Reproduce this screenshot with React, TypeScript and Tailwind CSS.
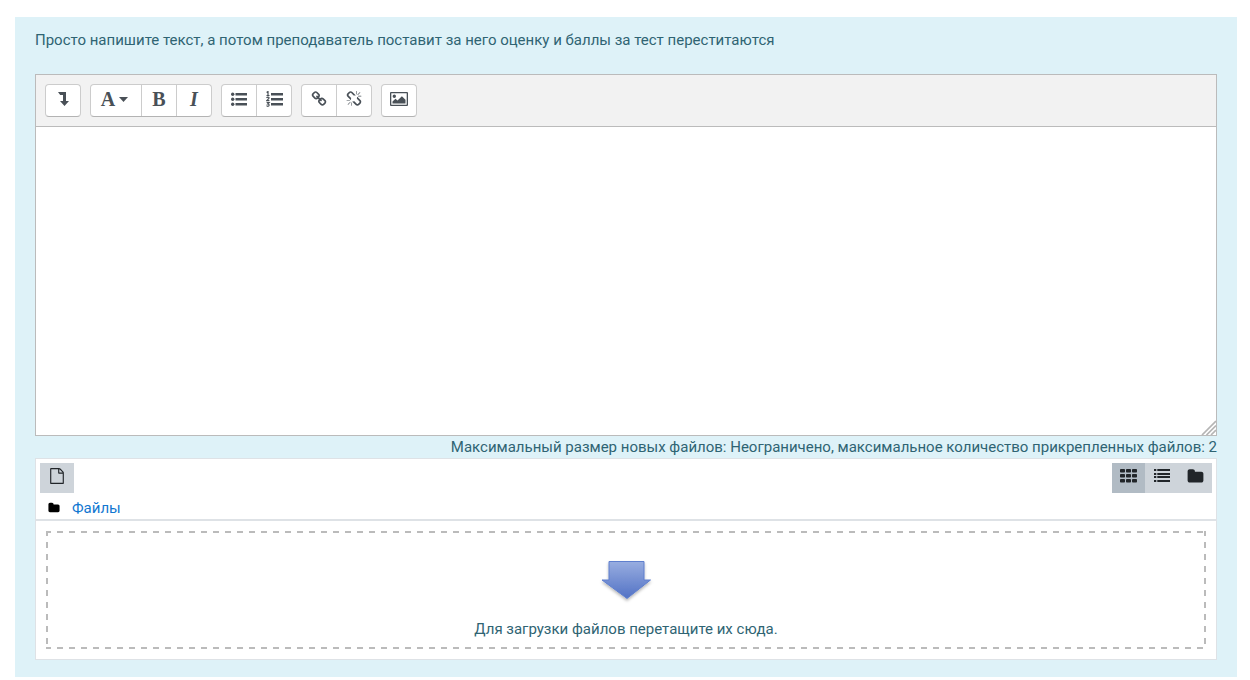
import type { ReactNode } from "react";
import clsx from "clsx";

type IconProps = {
  path: string;
  viewBox?: string;
  className?: string;
};

const Icon = ({ path, viewBox = "0 0 1792 1792", className = "h-4 w-4" }: IconProps) => (
  <svg viewBox={viewBox} className={clsx("shrink-0", className)} fill="currentColor" aria-hidden="true">
    <path d={path} />
  </svg>
);

const icons = {
  levelDown: "M1 1h8v9h3l-4.5 5L3 10h3V4H3.2z",
  link: "M1520 1216q0-40-28-68l-208-208q-28-28-68-28-42 0-72 32 3 3 19 18.5t21.5 21.5 15 19 13 25.5 3.5 27.5q0 40-28 68t-68 28q-15 0-27.5-3.5t-25.5-13-19-15-21.5-21.5-18.5-19q-33 31-33 73 0 40 28 68l206 207q27 27 68 27 40 0 68-26l147-146q28-28 28-67zm-703-705q0-40-28-68l-206-207q-28-28-68-28-39 0-68 27l-147 146q-28 28-28 67 0 40 28 68l208 208q27 27 68 27 42 0 72-31-3-3-19-18.5t-21.5-21.5-15-19-13-25.5-3.5-27.5q0-40 28-68t68-28q15 0 27.5 3.5t25.5 13 19 15 21.5 21.5 18.5 19q33-31 33-73zm895 705q0 120-85 203l-147 146q-83 83-203 83-121 0-204-85l-206-207q-83-83-83-203 0-123 88-209l-88-88q-86 88-208 88-120 0-204-84l-208-208q-84-84-84-204t85-203l147-146q83-83 203-83 121 0 204 85l206 207q83 83 83 203 0 123-88 209l88 88q86-88 208-88 120 0 204 84l208 208q84 84 84 204z",
  unlink:
    "M503 1271l-256 256q-10 9-23 9-12 0-23-9-9-10-9-23t9-23l256-256q10-9 23-9t23 9q9 10 9 23t-9 23zm169 41v320q0 14-9 23t-23 9-23-9-9-23v-320q0-14 9-23t23-9 23 9 9 23zm-224-224q0 14-9 23t-23 9h-320q-14 0-23-9t-9-23 9-23 23-9h320q14 0 23 9t9 23zm1264 128q0 120-85 203l-147 146q-83 83-203 83-121 0-204-85l-334-335q-21-21-42-56l239-18 273 274q28 28 68 27.5t68-27.5l147-146q28-28 28-67 0-40-28-68l-274-275 18-239q35 21 56 42l336 336q84 86 84 204zm-617-724l-239 18-273-274q-28-28-68-28-39 0-68 27l-147 146q-28 28-28 67 0 40 28 68l274 274-18 240q-35-21-56-42l-336-336q-84-86-84-204 0-120 85-203l147-146q83-83 203-83 121 0 204 85l334 335q21 21 42 56zm633 84q0 14-9 23t-23 9h-320q-14 0-23-9t-9-23 9-23 23-9h320q14 0 23 9t9 23zm-544-544v320q0 14-9 23t-23 9-23-9-9-23v-320q0-14 9-23t23-9 23 9 9 23zm407 151l-256 256q-11 9-23 9t-23-9q-9-10-9-23t9-23l256-256q10-9 23-9t23 9q9 10 9 23t-9 23z",
  picture: "M1 1h16a1 1 0 0 1 1 1v12a1 1 0 0 1-1 1H1a1 1 0 0 1-1-1V2a1 1 0 0 1 1-1zm.3 1.3v11.4h15.4V2.3zM4.3 3.6a1.7 1.7 0 1 1 0 3.4 1.7 1.7 0 0 1 0-3.4zM2.5 12.5v-2l3-2.8 2 1.8 4.4-4.3 3.6 3.6v3.7z",
  file: "M1596 380q28 28 48 76t20 88v1152q0 40-28 68t-68 28h-1344q-40 0-68-28t-28-68v-1600q0-40 28-68t68-28h896q40 0 88 20t76 48zm-444-244v376h376q-10-29-22-41l-313-313q-12-12-41-22zm384 1528v-1024h-416q-40 0-68-28t-28-68v-416h-768v1536h1280z",
  folder:
    "M1728 608v704q0 92-66 158t-158 66h-1216q-92 0-158-66t-66-158v-960q0-92 66-158t158-66h320q92 0 158 66t66 158v32h672q92 0 158 66t66 158z",
};

const BulletListIcon = () => (
  <svg viewBox="0 0 16 16" className="h-4 w-4 shrink-0" fill="currentColor" aria-hidden="true">
    <path d="M4.5 2H16v2.4H4.5zM4.5 7H16v2.4H4.5zM4.5 12H16v2.4H4.5z" />
    {[3.2, 8.2, 13.2].map((y) => (
      <circle key={y} cx="1.7" cy={y} r="1.7" />
    ))}
  </svg>
);

const NumberedListIcon = () => (
  <svg viewBox="0 0 17 16" className="h-4 w-[17px] shrink-0" fill="currentColor" aria-hidden="true">
    <path d="M5 2h12v2.4H5zM5 7h12v2.4H5zM5 12h12v2.4H5z" />
    <path
      d="M.6 1.4L2 .5v4M.5 4.5h3M.6 7q.5-1 1.5-.9 1.1.2.9 1.1-.1.6-2.3 2.4h2.7M.6 11.5h2.5l-1.4 1.5q1.5 0 1.5 1.1 0 1.2-1.3 1.2-.9 0-1.4-.6"
      fill="none"
      stroke="currentColor"
      strokeWidth="1.2"
    />
  </svg>
);

const GridIcon = () => (
  <svg viewBox="0 0 17 14" className="h-3.5 w-[17px]" fill="currentColor" aria-hidden="true">
    {[0, 5, 10].map((y) =>
      [0, 6, 12].map((x) => <rect key={`${x}-${y}`} x={x} y={y} width="5" height="3.6" rx="0.8" />)
    )}
  </svg>
);

const DetailsIcon = () => (
  <svg viewBox="0 0 16 14" className="h-3.5 w-4" fill="currentColor" aria-hidden="true">
    {[0, 4, 7, 11].map((y) => (
      <path key={y} d={`M0 ${y}h2.3v2H0zM3.3 ${y}H16v2H3.3z`} />
    ))}
  </svg>
);

const DropArrow = () => (
  <svg viewBox="0 0 60 50" className="h-[50px] w-[60px]" aria-hidden="true">
    <defs>
      <linearGradient id="arrowFill" x1="0" y1="0" x2="0" y2="1">
        <stop offset="0" stopColor="#98ade0" />
        <stop offset="1" stopColor="#5272c5" />
      </linearGradient>
      <filter id="arrowShadow" x="-20%" y="-20%" width="140%" height="150%">
        <feDropShadow dx="0" dy="2" stdDeviation="1.8" floodColor="#000" floodOpacity="0.28" />
      </filter>
    </defs>
    <path
      d="M13 5.5h35V24h6.5L31 42.500L6 24H13z"
      fill="url(#arrowFill)"
      stroke="#5f7fcd"
      filter="url(#arrowShadow)"
    />
  </svg>
);

// Groups of editor buttons, left to right
const toolbar: { label: string; icon: ReactNode; wide?: boolean }[][] = [
  [
    {
      label: "Показать больше кнопок",
      icon: <Icon path={icons.levelDown} viewBox="0 0 12 16" className="h-4 w-3" />,
    },
  ],
  [
    {
      label: "Стили абзаца",
      wide: true,
      icon: (
        <>
          <span className="font-['Liberation_Serif',serif] text-xl leading-4 font-bold">A</span>
          <svg viewBox="0 0 9 5" className="ml-1 h-[5px] w-[9px]" fill="currentColor" aria-hidden="true">
            <path d="M0 0h9L4.5 5z" />
          </svg>
        </>
      ),
    },
    {
      label: "Полужирный",
      icon: <span className="font-['Liberation_Serif',serif] text-xl leading-4 font-bold">B</span>,
    },
    {
      label: "Курсив",
      icon: <span className="font-['Liberation_Serif',serif] text-xl leading-4 font-bold italic">I</span>,
    },
  ],
  [
    { label: "Маркированный список", icon: <BulletListIcon /> },
    { label: "Нумерованный список", icon: <NumberedListIcon /> },
  ],
  [
    { label: "Ссылка", icon: <Icon path={icons.link} /> },
    { label: "Убрать ссылку", icon: <Icon path={icons.unlink} /> },
  ],
  [
    {
      label: "Изображение",
      icon: <Icon path={icons.picture} viewBox="0 0 18 16" className="h-4 w-[18px]" />,
    },
  ],
];

const views = [
  { label: "Значки", icon: <GridIcon />, active: true },
  { label: "Таблица", icon: <DetailsIcon />, active: false },
  { label: "Дерево", icon: <Icon path={icons.folder} className="h-[17px] w-[17px]" />, active: false },
];

const Editor = () => (
  <div className="relative border border-[#bbb] bg-white">
    <div className="flex flex-wrap gap-[9px] border-b border-[#bbb] bg-[#f2f2f2] p-[9px]">
      {toolbar.map((group, index) => (
        <div key={index} className="flex rounded border border-[#ccc] border-b-[#b3b3b3] bg-white">
          {group.map((button, i) => (
            <button
              key={button.label}
              type="button"
              title={button.label}
              aria-label={button.label}
              className={clsx(
                "flex h-[31px] items-center justify-center pb-[3px] text-[#495057]",
                button.wide ? "w-[50px] pr-[3px]" : i === 0 ? "w-[34px]" : "w-[35px]",
                i > 0 && "border-l border-[#ccc]"
              )}
            >
              {button.icon}
            </button>
          ))}
        </div>
      ))}
    </div>
    <textarea
      aria-label="Текст ответа"
      className="block h-[308px] w-full resize-none bg-white p-2 text-[#495057] outline-none"
    />
    {/* resize grip */}
    <svg
      viewBox="0 0 15 15"
      className="absolute right-0 bottom-0 h-[15px] w-[15px]"
      fill="none"
      stroke="#b5b5b5"
      strokeWidth="1.7"
      aria-hidden="true"
    >
      <path d="M1 15L15 1M5.5 15L15 5.5M10 15l5-5" />
    </svg>
  </div>
);

const FileManager = () => (
  <div className="border border-[#dee2e6] bg-white">
    <div className="flex justify-between p-1">
      <button
        type="button"
        title="Добавить"
        aria-label="Добавить"
        className="flex h-[30px] w-[34px] justify-center bg-[#ced4da] pt-[5px] text-[#212529]"
      >
        <Icon path={icons.file} />
      </button>
      <div className="flex">
        {views.map((view) => (
          <button
            key={view.label}
            type="button"
            title={view.label}
            aria-label={view.label}
            className={clsx(
              "flex h-[30px] w-[33px] justify-center pt-1 text-[#212529] last:w-[34px]",
              view.active ? "bg-[#b1bbc4]" : "bg-[#ced4da]"
            )}
          >
            <span className="flex h-[18px] items-center">{view.icon}</span>
          </button>
        ))}
      </div>
    </div>
    <div className="flex items-center border-b-2 border-[#dee2e6] pl-3 leading-[22px]">
      <Icon path={icons.folder} className="h-3 w-3 text-black" />
      <a href="#" className="ml-3 text-[#1177d1]">
        Файлы
      </a>
    </div>
    <div className="p-2.5">
      {/* wide dashes on all four sides: top, bottom, left, right */}
      <div className="flex h-[118px] flex-col items-center bg-[linear-gradient(90deg,#bbb_50%,transparent_50%),linear-gradient(90deg,#bbb_50%,transparent_50%),linear-gradient(#bbb_50%,transparent_50%),linear-gradient(#bbb_50%,transparent_50%)] bg-[size:12px_2px,12px_2px,2px_12px,2px_12px] bg-[position:-1px_0,-1px_100%,0_-1px,100%_-1px] [background-repeat:repeat-x,repeat-x,repeat-y,repeat-y] pt-[25px]">
        <DropArrow />
        <p className="mt-3">Для загрузки файлов перетащите их сюда.</p>
      </div>
    </div>
  </div>
);

const App = () => {
  return (
    <main className="bg-white pt-[17px] pr-[13px] pb-[3px] pl-[15px] font-[Roboto,sans-serif] text-[15px] leading-[22px] text-[#2f6473]">
      <section className="bg-[#def2f8] px-5 pt-3 pb-[17px]">
        <p className="mb-[23px]">
          Просто напишите текст, а потом преподаватель поставит за него оценку и баллы за тест переститаются
        </p>
        <Editor />
        <p className="text-right">
          Максимальный размер новых файлов: Неограничено, максимальное количество прикрепленных файлов: 2
        </p>
        <FileManager />
      </section>
    </main>
  );
};

export default App;
